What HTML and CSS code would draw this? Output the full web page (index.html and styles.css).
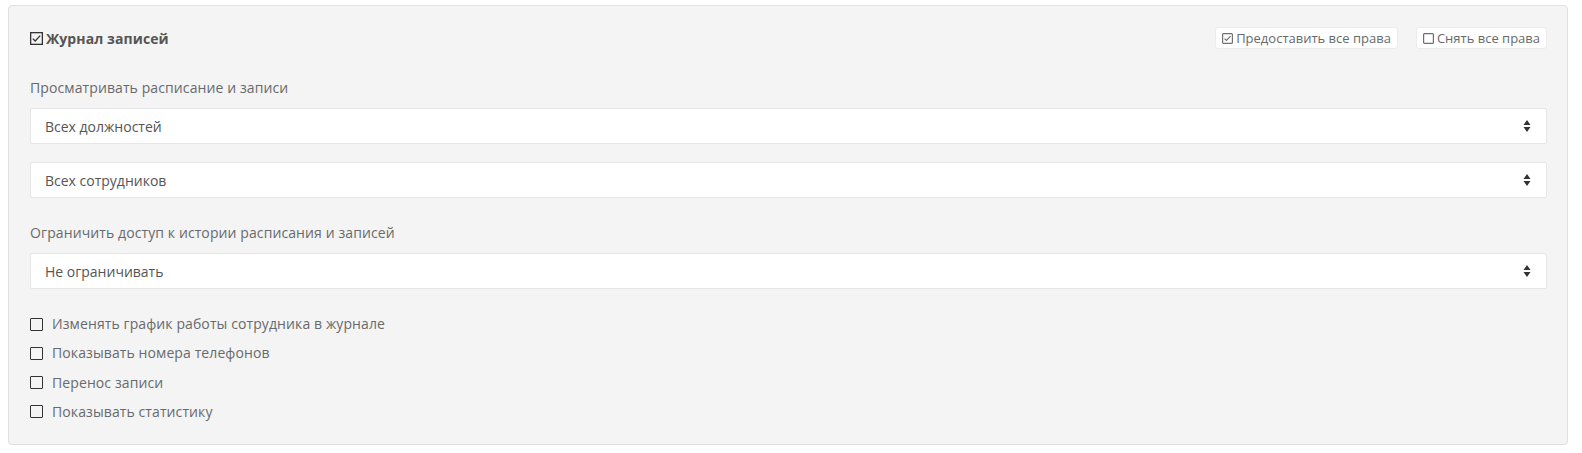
FILE: index.html
```html
<!DOCTYPE html>
<html lang="ru">
<head>
<meta charset="utf-8">
<title>Журнал записей</title>
<link rel="stylesheet" href="styles.css">
</head>
<body>
<div class="page">
  <div class="panel">
    <div class="panel-head">
      <div class="title">
        <svg class="cb cb-dark" viewBox="0 0 13 13" width="13" height="13"><rect x="0.65" y="0.65" width="11.7" height="11.7" fill="none" stroke="#333" stroke-width="1.3"/><path d="M2.8 6.6 L5.2 9 L10.2 3.6" fill="none" stroke="#333" stroke-width="1.3"/></svg>
        <span>Журнал записей</span>
      </div>
      <div class="actions">
        <button class="btn">
          <svg class="cb" viewBox="0 0 11 11" width="11" height="11"><rect x="0.6" y="0.6" width="9.8" height="9.8" rx="1" fill="none" stroke="#6f6f6f" stroke-width="1.2"/><path d="M2.5 5.6 L4.5 7.5 L8.5 3.2" fill="none" stroke="#6f6f6f" stroke-width="1.2"/></svg>
          Предоставить все права
        </button>
        <button class="btn">
          <svg class="cb" viewBox="0 0 11 11" width="11" height="11"><rect x="0.6" y="0.6" width="9.8" height="9.8" rx="1" fill="none" stroke="#6f6f6f" stroke-width="1.2"/></svg>
          Снять все права
        </button>
      </div>
    </div>

    <div class="group">
      <div class="label">Просматривать расписание и записи</div>
      <div class="select"><span>Всех должностей</span><svg class="arrow" viewBox="0 0 8 14" width="8" height="14"><path d="M4 1 L7.5 6 L0.5 6 Z M4 13 L7.5 8 L0.5 8 Z" fill="#333"/></svg></div>
      <div class="select second"><span>Всех сотрудников</span><svg class="arrow" viewBox="0 0 8 14" width="8" height="14"><path d="M4 1 L7.5 6 L0.5 6 Z M4 13 L7.5 8 L0.5 8 Z" fill="#333"/></svg></div>
    </div>

    <div class="group group2">
      <div class="label">Ограничить доступ к истории расписания и записей</div>
      <div class="select"><span>Не ограничивать</span><svg class="arrow" viewBox="0 0 8 14" width="8" height="14"><path d="M4 1 L7.5 6 L0.5 6 Z M4 13 L7.5 8 L0.5 8 Z" fill="#333"/></svg></div>
    </div>

    <div class="checks">
      <label class="check"><span class="box"></span>Изменять график работы сотрудника в журнале</label>
      <label class="check"><span class="box"></span>Показывать номера телефонов</label>
      <label class="check"><span class="box"></span>Перенос записи</label>
      <label class="check"><span class="box"></span>Показывать статистику</label>
    </div>
  </div>
</div>
</body>
</html>
```

FILE: styles.css
```css
* { box-sizing: border-box; }
html, body { margin: 0; padding: 0; background: #fff; }
body {
  font-family: "Open Sans", "Noto Sans", "Liberation Sans", sans-serif;
  font-size: 14px;
  color: #676a6c;
}
.page {
  padding: 5px 14px 10px 8px;
}
.panel {
  background: #f4f4f4;
  border: 1px solid #e0e0e0;
  border-radius: 4px;
  padding: 21px 20px 22px 21px;
}
.panel-head {
  display: flex;
  justify-content: space-between;
  align-items: center;
  height: 22px;
}
.title {
  display: flex;
  align-items: center;
  gap: 3px;
  font-weight: 700;
  font-size: 14px;
  letter-spacing: 0.1px;
  color: #555;
}
.actions {
  display: flex;
  gap: 18px;
}
.btn {
  display: flex;
  align-items: center;
  gap: 3px;
  height: 22px;
  padding: 0 6px 0 6px;
  background: #fff;
  border: 1px solid #ececec;
  border-radius: 3px;
  font-family: inherit;
  font-size: 13px;
  color: #676a6c;
  cursor: pointer;
}
.group { margin-top: 29px; }
.group2 { margin-top: 25px; }
.label {
  line-height: 20px;
  height: 20px;
  margin-bottom: 10px;
  letter-spacing: 0.1px;
}
.select {
  display: flex;
  align-items: center;
  justify-content: space-between;
  height: 36px;
  background: #fff;
  border: 1px solid #e5e6e7;
  border-radius: 2px;
  padding: 0 15px 0 14px;
  color: #555;
}
.select.second { margin-top: 18px; }
.arrow { display: block; }
.checks {
  margin-top: 25px;
  display: flex;
  flex-direction: column;
  gap: 9.3px;
}
.check {
  display: flex;
  align-items: center;
  height: 20px;
  line-height: 20px;
  gap: 9px;
  letter-spacing: 0.1px;
}
.box {
  width: 13px;
  height: 13px;
  border: 1.5px solid #333;
  border-radius: 1px;
  margin-left: 0;
  background: transparent;
}
```
